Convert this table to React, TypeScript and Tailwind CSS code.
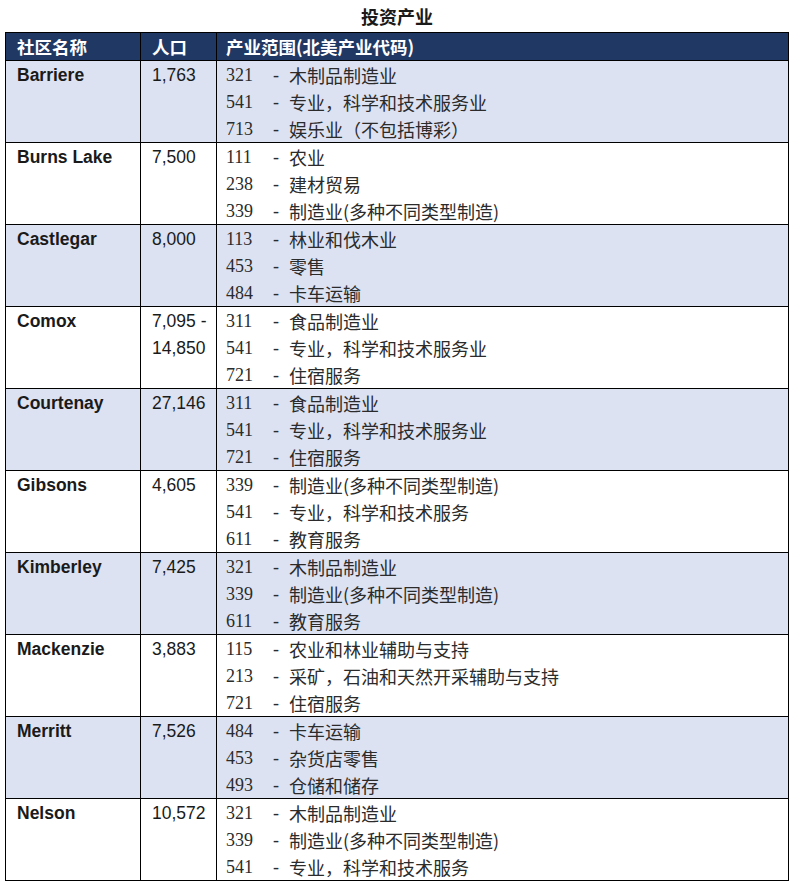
import React from "react";

type Row = { name: string; pop: string[]; items: [string, string][] };

const rows: Row[] = [
  { name: "Barriere", pop: ["1,763"], items: [["321", "木制品制造业"], ["541", "专业，科学和技术服务业"], ["713", "娱乐业（不包括博彩）"]] },
  { name: "Burns Lake", pop: ["7,500"], items: [["111", "农业"], ["238", "建材贸易"], ["339", "制造业(多种不同类型制造)"]] },
  { name: "Castlegar", pop: ["8,000"], items: [["113", "林业和伐木业"], ["453", "零售"], ["484", "卡车运输"]] },
  { name: "Comox", pop: ["7,095 -", "14,850"], items: [["311", "食品制造业"], ["541", "专业，科学和技术服务业"], ["721", "住宿服务"]] },
  { name: "Courtenay", pop: ["27,146"], items: [["311", "食品制造业"], ["541", "专业，科学和技术服务业"], ["721", "住宿服务"]] },
  { name: "Gibsons", pop: ["4,605"], items: [["339", "制造业(多种不同类型制造)"], ["541", "专业，科学和技术服务"], ["611", "教育服务"]] },
  { name: "Kimberley", pop: ["7,425"], items: [["321", "木制品制造业"], ["339", "制造业(多种不同类型制造)"], ["611", "教育服务"]] },
  { name: "Mackenzie", pop: ["3,883"], items: [["115", "农业和林业辅助与支持"], ["213", "采矿，石油和天然开采辅助与支持"], ["721", "住宿服务"]] },
  { name: "Merritt", pop: ["7,526"], items: [["484", "卡车运输"], ["453", "杂货店零售"], ["493", "仓储和储存"]] },
  { name: "Nelson", pop: ["10,572"], items: [["321", "木制品制造业"], ["339", "制造业(多种不同类型制造)"], ["541", "专业，科学和技术服务"]] },
];

const cjk = "font-['Noto_Sans_CJK_SC',sans-serif]";
const arial = "font-['Liberation_Sans',Arial,sans-serif]";
const serif = "font-['Liberation_Serif','Noto_Sans_CJK_SC',serif]";

export default function App() {
  return (
    <div className="w-[794px] h-[891px] bg-white text-[#1a1a1a]">
      <div className={`h-[32px] flex items-center justify-center text-[18px] font-bold ${cjk}`}>
        投资产业
      </div>
      <div className="ml-[5px] w-[784px] border border-black">
        <div className={`flex h-[27px] bg-[#203864] text-white text-[17.5px] font-bold leading-[27px] ${cjk}`}>
          <div className="w-[135px] border-r border-black pl-[11px]">社区名称</div>
          <div className="w-[76px] border-r border-black pl-[11px]">人口</div>
          <div className="flex-1 pl-[9px]">产业范围(北美产业代码)</div>
        </div>
        {rows.map((r, i) => (
          <div
            key={r.name}
            className={`flex h-[82px] border-t border-black ${i % 2 === 0 ? "bg-[#dce2f2]" : "bg-white"}`}
          >
            <div className={`w-[135px] border-r border-black pl-[11px] pt-[1px] leading-[27px] text-[17.5px] font-bold ${arial}`}>
              {r.name}
            </div>
            <div className={`w-[76px] border-r border-black pl-[11px] pt-[1px] leading-[27px] text-[17.5px] ${arial}`}>
              {r.pop.map((p) => (
                <div key={p} className="whitespace-nowrap">{p}</div>
              ))}
            </div>
            <div className="flex-1 pl-[9px] pt-[1px] flex flex-col text-[#2b2b2b]">
              {r.items.map(([code, text], j) => (
                <div key={j} className="flex h-[27px] items-center whitespace-nowrap">
                  <span className={`w-[47px] text-[18px] ${serif}`}>{code}</span>
                  <span className={`w-[16px] text-[18px] ${serif}`}>-</span>
                  <span className={`text-[18px] ${cjk}`}>{text}</span>
                </div>
              ))}
            </div>
          </div>
        ))}
      </div>
    </div>
  );
}
